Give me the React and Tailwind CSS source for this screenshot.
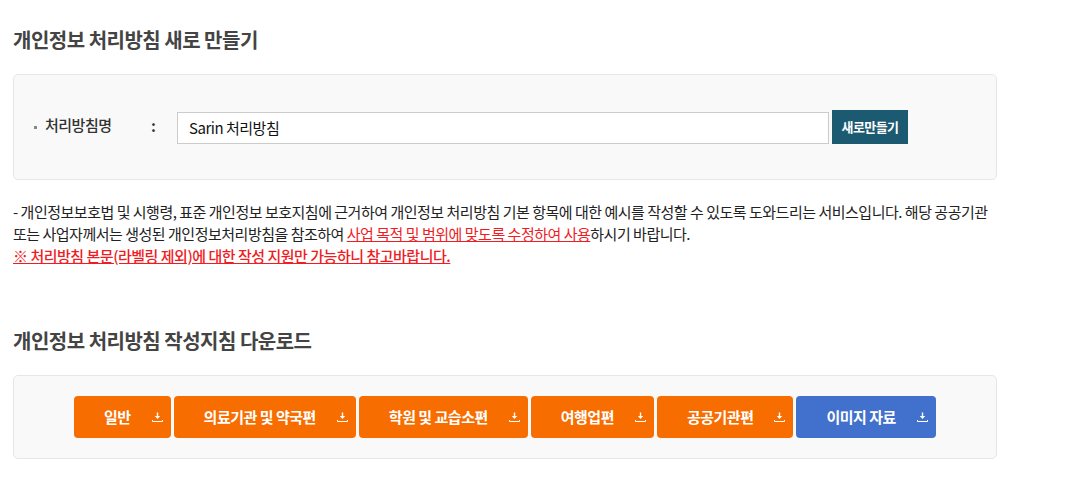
const font = { fontFamily: '"Noto Sans CJK KR", "Noto Sans", sans-serif' };

const guides = [
  { label: "일반", color: "bg-[#f76d00]" },
  { label: "의료기관 및 약국편", color: "bg-[#f76d00]" },
  { label: "학원 및 교습소편", color: "bg-[#f76d00]" },
  { label: "여행업편", color: "bg-[#f76d00]" },
  { label: "공공기관편", color: "bg-[#f76d00]" },
  { label: "이미지 자료", color: "bg-[#4170cd]" },
];

const DownloadIcon = () => (
  <svg width="11" height="11" viewBox="0 0 11 11" fill="none" className="absolute right-[8px] top-[16px]">
    <path d="M5.5 0.5V5" stroke="white" strokeWidth="1.4" />
    <path d="M2.8 4H8.2L5.5 7Z" fill="white" />
    <path d="M0.5 8V9.5H10.5V8" stroke="white" strokeWidth="1" />
  </svg>
);

export default function App() {
  return (
    <div style={font} className="w-[1065px] h-[493px] bg-white overflow-hidden pl-[13px] pt-[26px] text-[#333]">
      <div className="w-[984px]">
        <h2 className="text-[20px] leading-[28px] font-bold tracking-[-0.5px] text-[#444]">개인정보 처리방침 새로 만들기</h2>

        <div className="mt-[20px] h-[106px] border border-[#e6e6e6] rounded-[5px] bg-[#f9f9f9] flex items-center pl-[20px]">
          <span className="w-[3px] h-[3px] bg-[#888] mr-[8px]" />
          <span className="w-[106px] text-[15px] font-medium tracking-[-0.5px] text-[#333] -mt-[4px]">처리방침명</span>
          <span className="w-[26px] text-[15px] font-bold -mt-[2px]">:</span>
          <input
            readOnly
            value="Sarin 처리방침"
            className="w-[652px] h-[32px] mt-[2px] border border-[#ccc] bg-white pl-[11px] pb-[2px] text-[15px] text-[#111] tracking-[-0.48px] outline-none"
          />
          <button className="ml-[3px] w-[76px] h-[34px] bg-[#1c5a72] text-white text-[13px] font-bold tracking-[-0.6px]">새로만들기</button>
        </div>

        <div className="mt-[21px] text-[15px] leading-[22px] tracking-[-0.49px] text-[#222]">
          <p>- 개인정보보호법 및 시행령, 표준 개인정보 보호지침에 근거하여 개인정보 처리방침 기본 항목에 대한 예시를 작성할 수 있도록 도와드리는 서비스입니다. 해당 공공기관</p>
          <p>
            또는 사업자께서는 생성된 개인정보처리방침을 참조하여{" "}
            <span className="text-[#f01c24] underline">사업 목적 및 범위에 맞도록 수정하여 사용</span>
            하시기 바랍니다.
          </p>
          <p className="text-[#f01c24] underline font-medium">※ 처리방침 본문(라벨링 제외)에 대한 작성 지원만 가능하니 참고바랍니다.</p>
        </div>

        <h2 className="mt-[60px] text-[20px] leading-[28px] font-bold tracking-[-0.5px] text-[#444]">개인정보 처리방침 작성지침 다운로드</h2>

        <div className="mt-[20px] h-[84px] border border-[#e6e6e6] rounded-[5px] bg-[#f9f9f9] flex items-center pl-[60px] gap-[3px]">
          {guides.map((g) => (
            <button
              key={g.label}
              className={`relative h-[42px] pl-[30px] pr-[40px] rounded-[4px] text-white text-[15px] font-semibold tracking-[-0.5px] whitespace-nowrap ${g.color}`}
            >
              {g.label}
              <DownloadIcon />
            </button>
          ))}
        </div>
      </div>
    </div>
  );
}
